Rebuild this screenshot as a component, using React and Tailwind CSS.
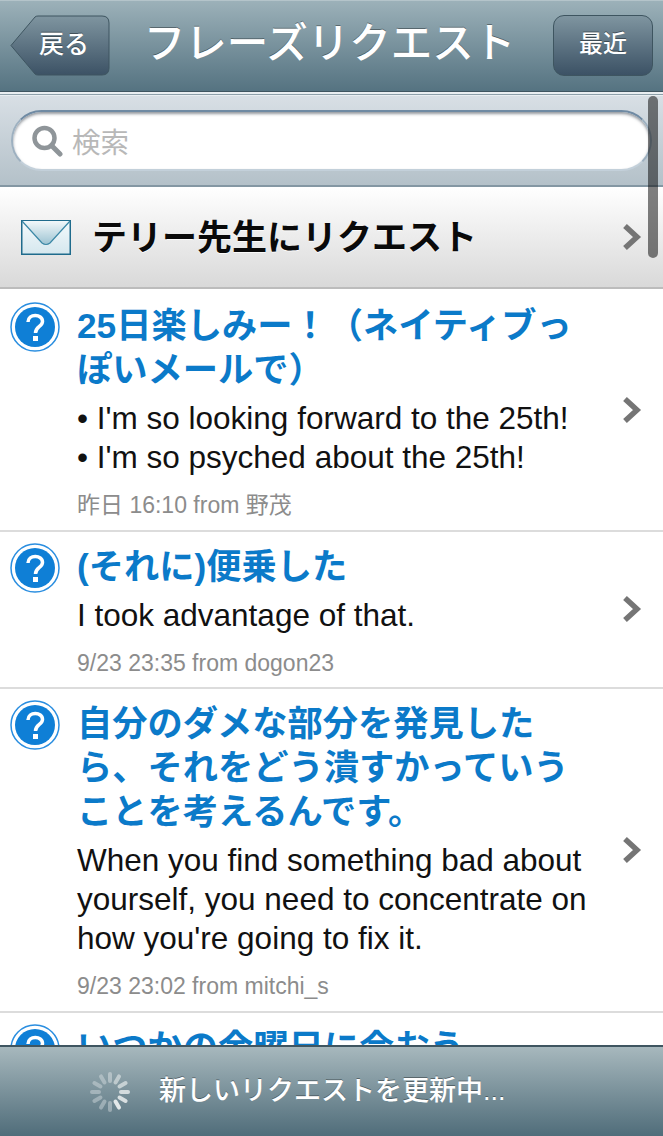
import React from "react";

const fontStack = "font-['Liberation_Sans','Noto_Sans_CJK_JP',sans-serif]";

const items = [
  {
    title: ["25日楽しみー！（ネイティブっ", "ぽいメールで）"],
    body: ["• I'm so looking forward to the 25th!", "• I'm so psyched about the 25th!"],
    meta: "昨日 16:10 from 野茂",
  },
  {
    title: ["(それに)便乗した"],
    body: ["I took advantage of that."],
    meta: "9/23 23:35 from dogon23",
  },
  {
    title: ["自分のダメな部分を発見した", "ら、それをどう潰すかっていう", "ことを考えるんです。"],
    body: ["When you find something bad about", "yourself, you need to concentrate on", "how you're going to fix it."],
    meta: "9/23 23:02 from mitchi_s",
  },
];

const Chevron = ({ className = "" }) => (
  <svg width="20" height="28" viewBox="0 0 20 28" className={className}>
    <path d="M3 3 L15 14 L3 25" fill="none" stroke="#757575" strokeWidth="5.5" />
  </svg>
);

const HelpIcon = () => (
  <svg width="50" height="50" viewBox="0 0 50 50" className="-mt-[2px] shrink-0">
    <circle cx="25" cy="25" r="24" fill="#fff" stroke="#2a8ee0" strokeWidth="1.5" />
    <circle cx="25" cy="25" r="20" fill="#0f7fd6" />
    <path d="M18 20 C18 11.5 32.5 11.5 32.5 19.5 C32.5 24.5 25.5 24.5 25.5 31" fill="none" stroke="#fff" strokeWidth="3.5" />
    <rect x="23" y="34" width="5" height="5" fill="#fff" />
  </svg>
);

const Spinner = () => {
  const bars = [0, 30, 60, 90, 120, 150, 180, 210, 240, 270, 300, 330];
  const opacity = [0.45, 0.6, 0.7, 0.85, 0.9, 1, 0.4, 0.4, 0.4, 0.4, 0.4, 0.4];
  return (
    <svg width="42" height="42" viewBox="0 0 42 42">
      {bars.map((deg, i) => (
        <rect
          key={deg}
          x="19"
          y="1"
          width="4"
          height="11"
          rx="2"
          fill="#e4e9ea"
          opacity={opacity[i]}
          transform={`rotate(${deg} 21 21)`}
        />
      ))}
    </svg>
  );
};

const Envelope = () => (
  <svg width="50" height="35" viewBox="0 0 50 35">
    <defs>
      <linearGradient id="env" x1="0" y1="0" x2="0" y2="1">
        <stop offset="0" stopColor="#f4fafc" />
        <stop offset="1" stopColor="#d5e7ee" />
      </linearGradient>
      <linearGradient id="flap" x1="0" y1="0" x2="0" y2="1">
        <stop offset="0" stopColor="#f2f8fa" />
        <stop offset="1" stopColor="#9cc3d2" />
      </linearGradient>
    </defs>
    <rect x="0.75" y="0.75" width="48.5" height="33.5" fill="url(#env)" stroke="#1f6b8c" strokeWidth="1.5" />
    <path d="M1 1 L21 23 Q25 26 29 23 L49 1 Z" fill="url(#flap)" />
    <path d="M1 1 L21 23 Q25 26 29 23 L49 1" fill="none" stroke="#3b88a6" strokeWidth="1.2" />
  </svg>
);

const App = () => {
  return (
    <div className={`relative flex h-[1136px] w-[663px] flex-col overflow-hidden bg-white ${fontStack}`}>
      {/* nav bar */}
      <div className="flex h-[91px] shrink-0 items-center justify-between border-t border-[#b4c4ca] bg-gradient-to-b from-[#9cb1b9] to-[#557381] px-[10px] pb-[2px]">
        <div className="relative flex h-[61px] w-[100px] items-center justify-center pb-[1px] pl-[8px]">
          <svg width="100" height="61" viewBox="0 0 100 61" className="absolute top-0 left-0">
            <defs>
              <linearGradient id="back" x1="0" y1="0" x2="0" y2="1">
                <stop offset="0" stopColor="#7f95a0" />
                <stop offset="1" stopColor="#3c5265" />
              </linearGradient>
            </defs>
            <path
              d="M1 30.5 L25 2 Q26 1 28 1 L92 1 Q99 1 99 8 L99 53 Q99 60 92 60 L28 60 Q26 60 25 59 Z"
              fill="url(#back)"
              stroke="#3e5560"
              strokeWidth="1"
            />
          </svg>
          <span className="relative text-[25px] font-medium text-white [text-shadow:0_-1px_0_rgba(0,0,0,0.4)]">戻る</span>
        </div>
        <div className="flex-1 pr-[4px] pb-[2px] text-center text-[41.5px] leading-none font-medium whitespace-nowrap text-white [text-shadow:0_-1px_0_rgba(0,0,0,0.35)]">
          フレーズリクエスト
        </div>
        <div className="flex h-[61px] w-[100px] items-center justify-center rounded-[11px] border border-[#3e5560] bg-gradient-to-b from-[#7f95a0] to-[#3c5265] pb-[3px] text-[24px] font-medium text-white [text-shadow:0_-1px_0_rgba(0,0,0,0.4)]">
          最近
        </div>
      </div>
      <div className="h-[5px] shrink-0 border-t border-[#3f5560] bg-[#e9eef1]">
        <div className="mt-[2px] h-[1px] bg-[#8ea0aa]" />
      </div>

      {/* search */}
      <div className="flex h-[91px] shrink-0 items-center border-b-2 border-[#8497a3] bg-gradient-to-b from-[#d8dfe5] to-[#b4c1c9] px-[11px]">
        <div className="flex h-[61px] w-full items-center gap-[9px] rounded-full border-2 border-[#9db0c0] border-t-[#6f8aa3] border-b-[#c3d0da] bg-white pl-[18px] shadow-[inset_0_2px_3px_rgba(60,70,80,0.55)]">
          <svg width="32" height="32" viewBox="0 0 32 32">
            <circle cx="13.5" cy="13" r="10" fill="none" stroke="#8f9599" strokeWidth="4.5" />
            <path d="M20.5 20.5 L29 29" stroke="#8f9599" strokeWidth="5" strokeLinecap="round" />
          </svg>
          <span className="pt-[5px] text-[28.5px] text-[#b8b8b8]">検索</span>
        </div>
      </div>

      {/* request row */}
      <div className="flex h-[102px] shrink-0 items-center border-b-2 border-[#bcbcbc] bg-gradient-to-b from-white to-[#d9d9d9] px-[21px]">
        <Envelope />
        <span className="ml-[21px] flex-1 pt-[3px] text-[35px] font-bold text-[#0a0a0a] [text-shadow:0_1px_0_rgba(255,255,255,0.8)]">
          テリー先生にリクエスト
        </span>
        <Chevron />
      </div>

      {/* list */}
      <div className="min-h-0 flex-1 overflow-hidden pt-[2px]">
        {items.map((item) => (
          <div key={item.meta} className="flex border-b-2 border-[#dcdcdc] pt-[13px] pr-[21px] pb-[9.5px] pl-[10px]">
            <HelpIcon />
            <div className="ml-[17px] min-w-0 flex-1">
              <div className="text-[35.25px] leading-[44px] font-bold text-[#0b7ac9]">
                {item.title.map((line) => (
                  <div key={line} className="whitespace-nowrap">{line}</div>
                ))}
              </div>
              <div className="mt-[7px] text-[31.5px] leading-[39px] text-[#111]">
                {item.body.map((line) => (
                  <div key={line} className="whitespace-nowrap">{line}</div>
                ))}
              </div>
              <div className="mt-[13px] text-[23px] leading-[30px] text-[#8c8c8c]">{item.meta}</div>
            </div>
            <div className="flex items-center pb-[4px]">
              <Chevron />
            </div>
          </div>
        ))}
        <div className="flex pt-[13px] pl-[10px]">
          <HelpIcon />
          <div className="ml-[17px] text-[35.25px] leading-[44px] font-bold whitespace-nowrap text-[#0b7ac9]">
            いつかの金曜日に会おう
          </div>
        </div>
      </div>

      {/* loading bar */}
      <div className="flex h-[91px] shrink-0 items-center border-t-2 border-[#3f5560] bg-gradient-to-b from-[#a7b8bd] to-[#506d7a] pl-[89px]">
        <Spinner />
        <span className="ml-[28px] pb-[1px] text-[27px] font-medium whitespace-nowrap text-white [text-shadow:0_-1px_0_rgba(0,0,0,0.35)]">
          新しいリクエストを更新中...
        </span>
      </div>

      {/* scroll indicator */}
      <div className="absolute top-[96px] right-[5px] h-[162px] w-[10px] rounded-full bg-black/50" />
    </div>
  );
};

export default App;
